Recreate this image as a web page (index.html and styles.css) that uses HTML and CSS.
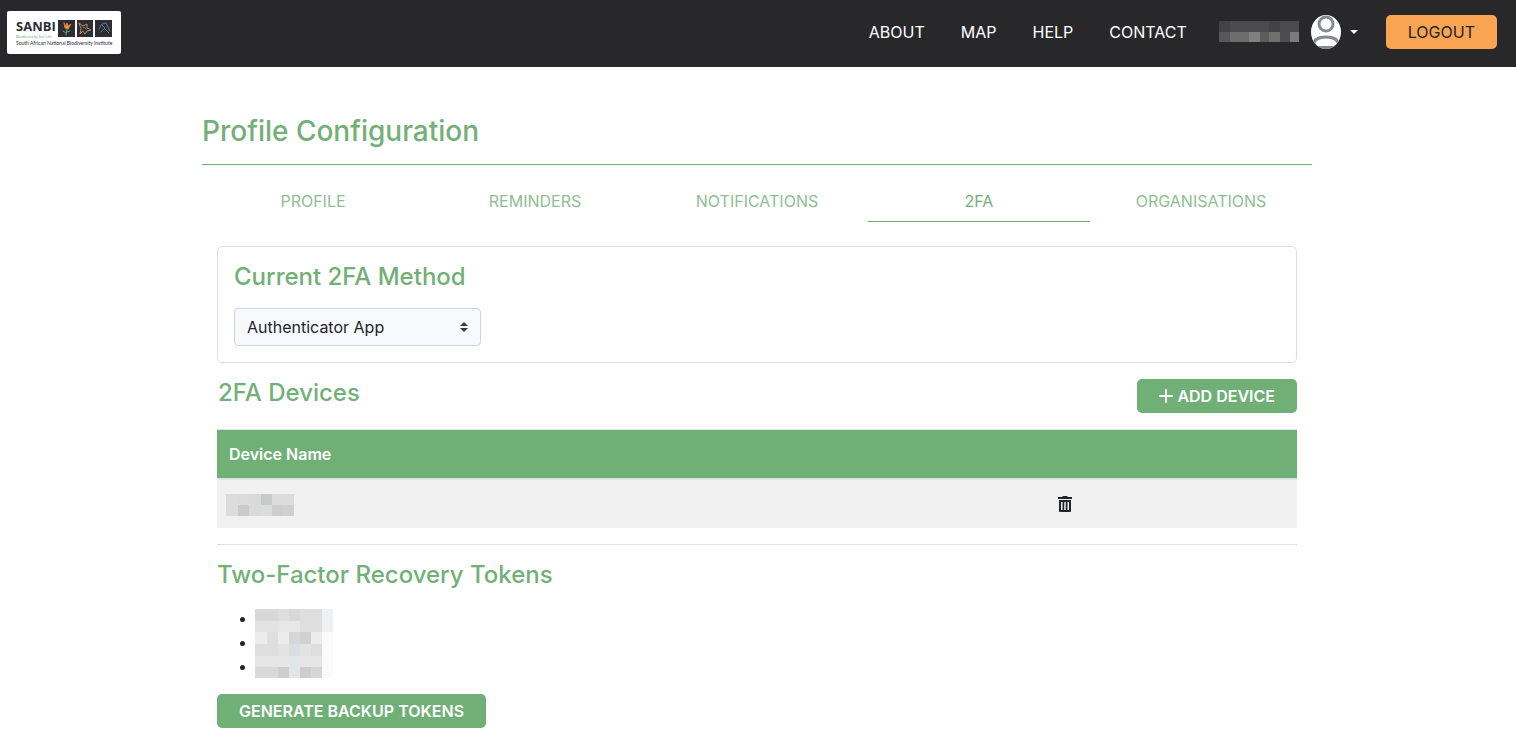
FILE: index.html
```html
<!DOCTYPE html>
<html lang="en">
<head>
<meta charset="utf-8">
<meta name="viewport" content="width=device-width, initial-scale=1">
<title>Profile Configuration</title>
<link rel="stylesheet" href="styles.css">
</head>
<body>
<header class="navbar">
  <a class="brand" href="#" aria-label="SANBI home">
    <svg class="brand-logo" width="114" height="43" viewBox="0 0 114 43">
      <rect width="114" height="43" rx="2" fill="#fff"/>
      <text class="logo-name" x="9" y="20">SANBI</text>
      <text class="logo-motto" x="9" y="27">Biodiversity for Life</text>
      <text class="logo-full" x="9" y="34">South African National Biodiversity Institute</text>
      <g fill="#2c2d35"><path d="M51 9h17v17H51zM70 9h16v17H70zM88 9h17v17H88z"/></g>
      <g fill="none" stroke-linecap="round" stroke-linejoin="round">
        <path d="M57 12l1 5 3 1 3-5-3 2-1-3-1 3z" fill="#e9a04a" stroke="#dd7a35"/>
        <path d="M60 18l-1 6M59 22l-3-2M60 21l3-1" stroke="#58a66b"/>
        <path d="M72 12l4 3 4-2v4l4 2-4 1-2 3-2-3-3 3 1-5z" stroke="#c08a45"/>
        <path d="M76 16l3 2" stroke="#5b8bb0"/>
        <path d="M92 18l3-5 4-1 2 4 2 4M95 14l3 3-4 4" stroke="#587d96"/>
        <path d="M98 18l4 4" stroke="#5d8f70"/>
      </g>
    </svg>
  </a>
  <nav class="nav-links">
    <a class="nav-link" href="#">ABOUT</a>
    <a class="nav-link" href="#">MAP</a>
    <a class="nav-link" href="#">HELP</a>
    <a class="nav-link" href="#">CONTACT</a>
  </nav>
  <button class="user-menu" type="button" aria-label="User menu">
    <svg class="user-name" width="80" height="21" viewBox="0 0 80 21" shape-rendering="crispEdges">
      <rect width="80" height="21" fill="#4b4b4d"/>
      <path d="M0 0h11v11H0zM50 0h11v11H50z" fill="#434345"/>
      <path d="M0 11h11v10H0z" fill="#57575c"/>
      <path d="M11 11h19v10H11z" fill="#6c6d6c"/>
      <path d="M30 11h11v10H30z" fill="#7f807f"/>
      <path d="M41 11h9v10h-9z" fill="#5d5d5f"/>
      <path d="M50 11h11v10H50z" fill="#70716f"/>
      <path d="M61 11h10v10H61z" fill="#4d4d50"/>
      <path d="M71 11h9v10h-9z" fill="#7b7b7b"/>
    </svg>
    <svg class="avatar" width="30" height="34" viewBox="0 0 30 34">
      <defs><clipPath id="avatar-clip"><ellipse cx="15" cy="17" rx="15" ry="17"/></clipPath></defs>
      <g clip-path="url(#avatar-clip)">
        <rect width="30" height="34" fill="#fff"/>
        <g fill="none" stroke="#868a8e" stroke-width="3">
          <circle cx="15" cy="9" r="7"/>
          <path d="M2 30C3 24 8 22 15 22s12 2 13 8"/>
          <path d="M4 32.500h22"/>
        </g>
      </g>
    </svg>
    <span class="caret"></span>
  </button>
  <button class="btn btn-logout" type="button">LOGOUT</button>
</header>

<main class="page">
  <h1 class="page-title">Profile Configuration</h1>
  <nav class="tabs">
    <a class="tab" href="#">PROFILE</a>
    <a class="tab" href="#">REMINDERS</a>
    <a class="tab" href="#">NOTIFICATIONS</a>
    <a class="tab tab-active" href="#" aria-current="page">2FA</a>
    <a class="tab" href="#">ORGANISATIONS</a>
  </nav>
  <div class="panel">
    <section class="card">
      <h2 class="section-title"><label for="method">Current 2FA Method</label></h2>
      <div class="select-wrap">
        <select class="select" id="method"><option>Authenticator App</option></select>
        <svg class="select-arrows" width="8" height="10" viewBox="0 0 8 10" aria-hidden="true"><path d="M0 4l4-4 4 4zM0 6l4 4 4-4z" fill="#343a40"/></svg>
      </div>
    </section>

    <div class="devices-head">
      <h2 class="section-title">2FA Devices</h2>
      <button class="btn btn-green" type="button">
        <svg width="14" height="14" viewBox="0 0 14 14" aria-hidden="true"><path d="M7 1v12M1 7h12" stroke="#fff" stroke-width="2" stroke-linecap="round"/></svg>
        <span>ADD DEVICE</span>
      </button>
    </div>
    <table class="devices">
      <thead><tr><th class="col-name" scope="col">Device Name</th><td class="col-action"></td></tr></thead>
      <tbody><tr>
        <td class="cell-name">
          <svg class="mosaic" width="68" height="22" viewBox="0 0 68 22" shape-rendering="crispEdges">
            <rect width="68" height="22" fill="#dcdcdd"/>
            <path d="M12 0h11v11H12z" fill="#dfdada"/>
            <path d="M23 0h12v22H23z" fill="#d8dadc"/>
            <path d="M35 0h11v11H35zM12 11h11v11H12z" fill="#cacacb"/>
            <path d="M46 11h11v11H46z" fill="#cdcdce"/>
            <path d="M57 11h11v11H57z" fill="#d0d0d1"/>
          </svg>
        </td>
        <td class="cell-action">
          <button class="icon-btn" type="button" aria-label="Delete device">
            <svg width="14" height="16" viewBox="0 0 14 16"><path fill="#212529" fill-rule="evenodd" d="M0 1h4l1-1h4l1 1h4v2H0zM1 4h12v11a1 1 0 0 1-1 1H2a1 1 0 0 1-1-1zM3 6v8h1.500V6zM6.250 6v8h1.500V6zM9.500 6v8H11V6z"/></svg>
          </button>
        </td>
      </tr></tbody>
    </table>
    <hr class="rule">
    <h2 class="section-title">Two-Factor Recovery Tokens</h2>
    <div class="tokens">
      <ul class="token-list"><li></li><li></li><li></li></ul>
      <svg class="token-mosaic" width="78" height="69" viewBox="0 0 78 69" shape-rendering="crispEdges">
        <rect width="67" height="69" fill="#dedede"/>
        <path d="M67 0h11v23H67z" fill="#eff0f1"/>
        <path d="M67 23h11v46H67z" fill="#fbfbfb"/>
        <path d="M0 0h23v12H0zM34 0h11v12H34z" fill="#d8d8d8"/>
        <path d="M0 12h23v11H0z" fill="#e3e3e3"/>
        <path d="M23 12h22v11H23z" fill="#e7e7e6"/>
        <path d="M0 23h12v12H0zM23 23h11v12H23zM56 23h11v12H56z" fill="#ececec"/>
        <path d="M34 23h11v12H34z" fill="#d7d7d8"/>
        <path d="M45 23h11v12H45z" fill="#d0d0d0"/>
        <path d="M34 35h11v12H34z" fill="#dcdde3"/>
        <path d="M23 35h11v12H23zM45 35h11v12H45z" fill="#e3e3e4"/>
        <path d="M0 47h67v11H0z" fill="#e6e6e6"/>
        <path d="M34 47h11v22H34z" fill="#e3e6e7"/>
        <path d="M0 58h23v11H0z" fill="#d9d9d9"/>
        <path d="M23 58h11v11H23zM45 58h11v11H45z" fill="#cececf"/>
        <path d="M56 58h11v11H56z" fill="#d6d6d6"/>
      </svg>
    </div>
    <button class="btn btn-green" type="button">GENERATE BACKUP TOKENS</button>
  </div>
</main>
</body>
</html>
```
FILE: styles.css
```css
* { box-sizing: border-box; }
body {
  margin: 0;
  font: 400 16px/24px Inter, "Liberation Sans", sans-serif;
  color: #212529;
  background: #fff;
}
h1, h2 { margin: 0; font-weight: 500; color: #72b077; }

.navbar {
  display: flex;
  align-items: center;
  height: 67px;
  padding: 0 19px 3px 7px;
  background: #28282a;
}
.brand { display: flex; margin-right: auto; }
.logo-name { font: 700 13px "Open Sans", sans-serif; fill: #2c2d35; }
.logo-motto { font: 400 4px "Open Sans", sans-serif; fill: #58a66b; }
.logo-full { font: 400 5px Lato, sans-serif; fill: #2c2d35; }
.nav-links { display: flex; gap: 36px; margin-right: 32px; }
.nav-link { color: #fff; text-decoration: none; }
.user-menu {
  display: flex;
  align-items: center;
  margin-right: 28px;
  padding: 0;
  border: 0;
  background: none;
}
.user-name { margin-bottom: 2px; }
.avatar { margin: 0 9px 0 12px; }
.caret { border: 4px solid transparent; border-top-color: #fff; border-bottom: 0; }

.btn {
  display: inline-flex;
  align-items: center;
  justify-content: center;
  gap: 4px;
  height: 34px;
  padding: 0 22px;
  border: 0;
  border-radius: 5px;
  font: inherit;
}
.btn-logout { background: #f9a453; color: #212529; }
.btn-green { background: #70b077; color: #fff; font-weight: 600; }

.page { max-width: 1142px; margin: 0 auto; padding: 47px 17px 16px 15px; }
.page-title {
  padding-bottom: 16px;
  border-bottom: 1px solid #70b077;
  font-size: 28px;
  line-height: 34px;
}
.tabs { display: grid; grid-template-columns: repeat(5, 1fr); margin-top: 16px; }
.tab {
  padding: 8px 0;
  border-bottom: 1px solid transparent;
  color: #8dbf92;
  text-align: center;
  text-decoration: none;
}
.tab-active { border-bottom-color: #70b077; color: #70b077; }

.panel { padding: 24px 15px 0; }
.card { padding: 16px; border: 1px solid #dfdfdf; border-radius: 5px; }
.section-title { font-size: 24px; line-height: 28px; }
.select-wrap { position: relative; width: 247px; margin-top: 17px; }
.select {
  display: block;
  width: 100%;
  height: 38px;
  padding: 0 12px;
  border: 1px solid #ced4da;
  border-radius: 4px;
  background: #f8f9fc;
  color: #212529;
  font: inherit;
  appearance: none;
}
.select-arrows { position: absolute; top: 14px; right: 13px; pointer-events: none; }

.devices-head { display: flex; justify-content: space-between; margin: 16px 0; padding-left: 1px; }
.devices { width: 100%; border-collapse: separate; border-spacing: 0; }
.devices th, .devices td { text-align: left; }
.devices thead th, .devices thead td {
  height: 51px;
  padding: 0 12px;
  border-top: 1px solid #dee2e6;
  border-bottom: 2px solid #dee2e6;
  background: #70b077;
  color: #fff;
  font-weight: 600;
}
.col-name { width: 77%; }
.devices tbody td { height: 48px; background: #f1f1f1; }
.devices .cell-name { padding: 2px 9px 0; }
.mosaic { display: block; }
.devices .cell-action { padding: 0 9px; }
.icon-btn { display: flex; padding: 0; border: 0; background: none; }
.rule { height: 1px; margin: 16px 0; border: 0; background: #dfdfdf; }
.tokens { display: flex; align-items: flex-start; margin: 20px 0 16px; }
.token-list { height: 72px; margin: -3px 0 0; padding-left: 40px; }
.token-list li { height: 24px; }
.token-mosaic { margin-left: -2px; }
```
